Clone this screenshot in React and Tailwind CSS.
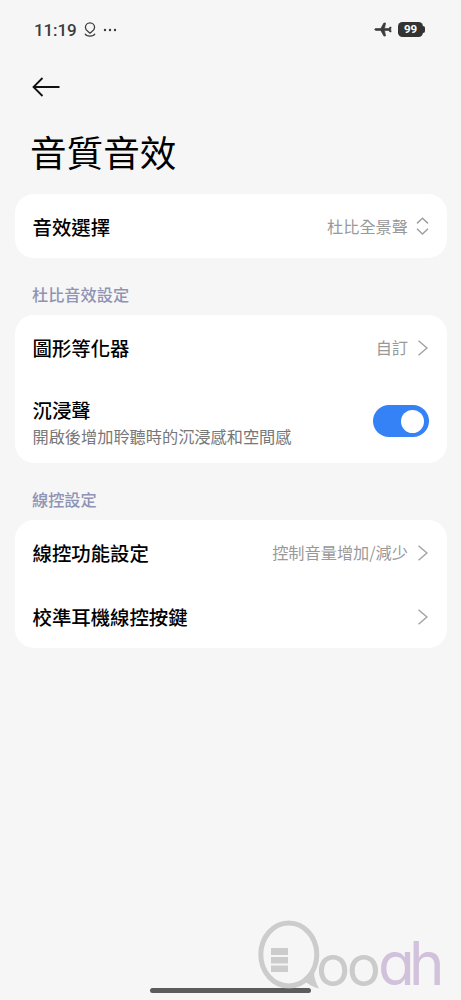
import React from 'react'

function StatusBar() {
  return (
    <div className="flex h-[60px] items-center pr-[36px] pl-[34px] text-[#3c3c3c]">
      <span className="font-[Roboto] text-[17px] leading-5 font-medium tracking-[-0.1px]">11:19</span>
      <svg className="ml-[7px] h-4 w-3" viewBox="0 0 12 16" fill="none" stroke="currentColor" strokeWidth="1.3">
        <path d="M6 11.2C4.8 9.8 1.4 8.4 1.4 5.4a4.6 4.6 0 0 1 9.2 0c0 3-3.4 4.4-4.6 5.8Z" />
        <path d="M1 11.8c1.6 3.2 8.4 3.2 10 0" />
      </svg>
      <svg className="ml-[7px] h-1 w-3.5" viewBox="0 0 14 4" fill="currentColor">
        <circle cx="2" cy="2" r="1.2" />
        <circle cx="7" cy="2" r="1.2" />
        <circle cx="12" cy="2" r="1.2" />
      </svg>
      <svg
        className="ml-auto h-4 w-[18px]"
        viewBox="0 0 18 16"
        fill="currentColor"
        stroke="currentColor"
        strokeWidth="0.7"
        strokeLinejoin="round"
      >
        <path d="M.7 7.500c0-.5.6-.9 1.400-.9h4.700L9.900 1h1.600l-1 5.600h4.200l1.200-1.500h1.200l-.4 2.400.4 2.400h-1.200l-1.200-1.500h-4.200l1 5.600H9.900L6.800 8.400H2.100C1.300 8.400.7 8 .7 7.500Z" />
      </svg>
      <div className="mb-px ml-1.5 flex items-center">
        <div className="flex h-[15px] w-[25px] items-center justify-center rounded-[4.5px] bg-[#333] font-[Roboto] text-[11.5px] font-bold text-white">
          99
        </div>
        <div className="h-[7px] w-[2px] rounded-r-full bg-[#333]" />
      </div>
    </div>
  )
}

function Chevron() {
  return (
    <svg className="ml-[9px] h-4 w-3 shrink-0" viewBox="0 0 12 16" fill="none" stroke="#a5a5a5" strokeWidth="1.5">
      <path d="M1.500 .7 9.900 8 1.500 15.300" />
    </svg>
  )
}

function UpDown() {
  return (
    <svg className="mb-0.5 ml-2 h-[18px] w-[13px] shrink-0" viewBox="0 0 13 18" fill="none" stroke="#a0a0a0" strokeWidth="1.5">
      <path d="M1 6.400 6.500 1.200 12 6.400M1 11.800 6.500 17 12 11.800" />
    </svg>
  )
}

function Row({ title, value, icon }) {
  return (
    <div className="flex h-16 items-center pt-px pr-[18px] pl-[18px]">
      <span className="text-[19.4px] font-medium text-black">{title}</span>
      <span className="ml-auto text-[16.2px] text-[#999]">{value}</span>
      {icon || <Chevron />}
    </div>
  )
}

function Card({ children }) {
  return <div className="mr-[14px] ml-[14.5px] rounded-[19px] bg-white">{children}</div>
}

function SectionLabel({ children }) {
  return (
    <div className="flex h-[57px] items-center pt-[15px] pl-[32px] text-[16.2px] font-medium text-[#8f93b4]">
      {children}
    </div>
  )
}

function Watermark() {
  return (
    <svg className="absolute top-[915px] left-[255px] h-[85px] w-[195px]" viewBox="0 0 195 85">
      <g opacity="0.8">
        <ellipse cx="33.800" cy="39.500" rx="28" ry="31.500" fill="none" stroke="#c2c2c2" strokeWidth="5" />
        <path d="M59 57c0 6 2 11 5 16.500-5.500-1.500-11-4-15-8 4-2 7-4.500 10-8.500Z" fill="#c2c2c2" />
        <path d="M16 33h17v7H16zM16 42h17v6.500H16zM16 50.500h17v6.500H16z" fill="#c2c2c2" />
      </g>
      <g className="font-[Inter] [font-feature-settings:'cv11']">
        <text className="text-[57px]" x="61 91.800" y="71" fill="#cbcbcb">oo</text>
        <text className="text-[60px]" x="123 154" y="69.800" fill="#d1c1db">ah</text>
      </g>
    </svg>
  )
}

export default function App() {
  return (
    <div className="relative h-[1000px] w-full overflow-hidden bg-[#f6f6f6] font-['Noto_Sans_CJK_TC',sans-serif]">
      <StatusBar />

      <div className="flex h-[54px] items-center pl-8">
        <svg className="h-5 w-7" viewBox="0 0 28 20" fill="none" stroke="#111" strokeWidth="1.8">
          <path d="M27.500 10H1.500M10.500 1 1.500 10l9 9" />
        </svg>
      </div>
      <h1 className="flex h-20 items-center pb-[3px] pl-[30px] text-[36.6px] font-normal text-black">音質音效</h1>

      <Card>
        <Row title="音效選擇" value="杜比全景聲" icon={<UpDown />} />
      </Card>

      <SectionLabel>杜比音效設定</SectionLabel>
      <Card>
        <Row title="圖形等化器" value="自訂" />
        <div className="flex h-[84px] items-center justify-between pr-[18px] pl-[18px]">
          <div className="flex flex-col pt-[3px]">
            <span className="text-[19.4px] leading-[26px] font-medium text-black">沉浸聲</span>
            <span className="text-[16.2px] leading-[26px] text-[#777]">開啟後增加聆聽時的沉浸感和空間感</span>
          </div>
          <div className="flex h-8 w-14 items-center justify-end rounded-full bg-[#3482f6] pr-[5px]">
            <div className="size-[23px] rounded-full bg-white" />
          </div>
        </div>
      </Card>

      <SectionLabel>線控設定</SectionLabel>
      <Card>
        <Row title="線控功能設定" value="控制音量增加/減少" />
        <Row title="校準耳機線控按鍵" />
      </Card>

      <div className="absolute top-[988px] left-[150px] h-[4.500px] w-[161px] rounded-full bg-[#5c5c5c]" />
      <Watermark />
    </div>
  )
}
